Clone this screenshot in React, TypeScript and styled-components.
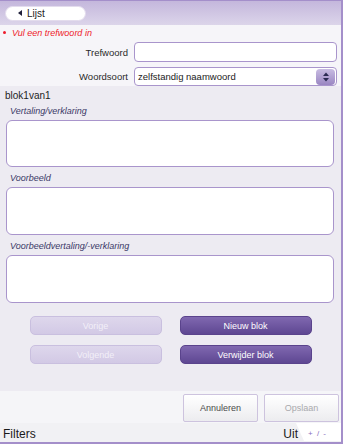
import styled, { createGlobalStyle } from "styled-components";

const GlobalStyle = createGlobalStyle`
  html, body {
    margin: 0;
    padding: 0;
    background: #ffffff;
  }
  * {
    box-sizing: border-box;
  }
`;

function App() {
  return (
    <>
      <GlobalStyle />
      <Page>
        <Header>
          <BackButton>
            <BackArrow />
            Lijst
          </BackButton>
        </Header>

        <TopForm>
          <ErrorLine>
            <ErrorDot />
            Vul een trefwoord in
          </ErrorLine>
          <FieldRow>
            <FieldName>Trefwoord</FieldName>
            <TextInput $height={20} />
          </FieldRow>
          <FieldRow>
            <FieldName>Woordsoort</FieldName>
            <SelectBox>
              <span>zelfstandig naamwoord</span>
              <Spinner>
                <svg width="8" height="12" viewBox="0 0 8 12">
                  <path d="M4 1.5 L7 5 L1 5 Z" fill="#2b2a52" />
                  <path d="M4 10.5 L7 7 L1 7 Z" fill="#2b2a52" />
                </svg>
              </Spinner>
            </SelectBox>
          </FieldRow>
        </TopForm>

        <Main>
          <BlockTitle>blok1van1</BlockTitle>
          <AreaLabel>Vertaling/verklaring</AreaLabel>
          <TextArea $height={47} />
          <AreaLabel>Voorbeeld</AreaLabel>
          <TextArea $height={48} />
          <AreaLabel>Voorbeeldvertaling/-verklaring</AreaLabel>
          <TextArea $height={48} />

          <ButtonGrid>
            <BlockButton $active={false}>Vorige</BlockButton>
            <BlockButton $active>Nieuw blok</BlockButton>
            <BlockButton $active={false}>Volgende</BlockButton>
            <BlockButton $active>Verwijder blok</BlockButton>
          </ButtonGrid>
        </Main>

        <Actions>
          <ActionButton $disabled={false}>Annuleren</ActionButton>
          <ActionButton $disabled>Opslaan</ActionButton>
        </Actions>

        <FilterBar>
          <FilterTitle>Filters</FilterTitle>
          <FilterState>Uit</FilterState>
          <ToggleTab>+ / -</ToggleTab>
        </FilterBar>
      </Page>
    </>
  );
}

const Page = styled.div`
  width: 343px;
  height: 444px;
  display: flex;
  flex-direction: column;
  border-right: 2px solid #a48fca;
  border-bottom: 2px solid #a48fca;
  font-family: "Liberation Sans", Arial, sans-serif;
  overflow: hidden;
`;

const Header = styled.div`
  height: 25px;
  flex: none;
  display: flex;
  align-items: center;
  padding-left: 5px;
  border-top: 1px solid #a48fca;
  background: linear-gradient(#c4b7dc, #dcd5ea);
`;

const BackButton = styled.div`
  width: 81px;
  height: 15px;
  display: flex;
  align-items: center;
  gap: 5px;
  padding-left: 12px;
  background: #ffffff;
  border: 1px solid #e3dced;
  border-radius: 8px;
  font-size: 10px;
  color: #222222;
`;

const BackArrow = styled.span`
  width: 0;
  height: 0;
  border-top: 3px solid transparent;
  border-bottom: 3px solid transparent;
  border-right: 4px solid #1f1f3a;
`;

const TopForm = styled.div`
  height: 61px;
  flex: none;
  display: flex;
  flex-direction: column;
  gap: 5px;
  padding: 3px 4px 0 0;
  background: #f6f5f9;
`;

const ErrorLine = styled.div`
  display: flex;
  align-items: center;
  gap: 6px;
  padding-left: 3px;
  height: 9px;
  font-size: 9px;
  font-style: italic;
  color: #ee1c2c;
`;

const ErrorDot = styled.span`
  width: 3px;
  height: 3px;
  border-radius: 50%;
  background: #ee1c2c;
`;

const FieldRow = styled.div`
  display: grid;
  grid-template-columns: 128px 1fr;
  column-gap: 6px;
  align-items: center;
`;

const FieldName = styled.div`
  text-align: right;
  font-size: 9.5px;
  color: #2a2a2a;
`;

const TextInput = styled.div<{ $height: number }>`
  height: ${(p) => p.$height}px;
  background: #ffffff;
  border: 1px solid #a995cc;
  border-radius: 4px;
`;

const SelectBox = styled.div`
  height: 19px;
  display: flex;
  align-items: center;
  justify-content: space-between;
  padding: 0 1px 0 3px;
  background: #ffffff;
  border: 1px solid #a995cc;
  border-radius: 4px;
  font-size: 9.5px;
  color: #222222;
`;

const Spinner = styled.div`
  width: 19px;
  height: 16px;
  display: flex;
  align-items: center;
  justify-content: center;
  border-radius: 4px;
  background: linear-gradient(#c8bce2, #9a86c2);
`;

const Main = styled.div`
  flex: 1;
  display: flex;
  flex-direction: column;
  padding: 4px 7px 0 6px;
  background: #edebf2;
`;

const BlockTitle = styled.div`
  height: 12px;
  margin-left: -1px;
  font-size: 10px;
  line-height: 12px;
  color: #1e1e1e;
`;

const AreaLabel = styled.div`
  height: 12px;
  margin: 3px 0 3px 4px;
  font-size: 9px;
  line-height: 12px;
  font-style: italic;
  color: #3a3866;

  &:not(:nth-child(2)) {
    margin-top: 5px;
  }
`;

const TextArea = styled.div<{ $height: number }>`
  height: ${(p) => p.$height}px;
  background: #ffffff;
  border: 1px solid #a995cc;
  border-radius: 6px;
`;

const ButtonGrid = styled.div`
  display: grid;
  grid-template-columns: 132px 132px;
  justify-content: center;
  column-gap: 18px;
  row-gap: 10px;
  margin-top: 13px;
  margin-left: 1px;
`;

const BlockButton = styled.div<{ $active: boolean }>`
  height: 19px;
  display: flex;
  align-items: center;
  justify-content: center;
  border-radius: 5px;
  font-size: 9px;
  color: ${(p) => (p.$active ? "#ffffff" : "#f2eff8")};
  background: ${(p) =>
    p.$active
      ? "linear-gradient(#8068b0, #5e4792)"
      : "linear-gradient(#ded7ec, #d2c9e5)"};
  border: 1px solid ${(p) => (p.$active ? "#5a438c" : "#c9bfdf")};
`;

const Actions = styled.div`
  height: 32px;
  flex: none;
  display: flex;
  justify-content: flex-end;
  align-items: flex-start;
  gap: 6px;
  padding: 3px 2px 0 0;
  background: #f5f5f8;
`;

const ActionButton = styled.div<{ $disabled: boolean }>`
  width: 75px;
  height: 28px;
  display: flex;
  align-items: center;
  justify-content: center;
  border: 1px solid #cdc3de;
  border-radius: 2px;
  background: linear-gradient(#ffffff, #ececef);
  font-size: 9px;
  color: ${(p) => (p.$disabled ? "#a9a9ad" : "#4a4a4a")};
`;

const FilterBar = styled.div`
  height: 19px;
  flex: none;
  display: flex;
  align-items: flex-end;
  padding: 0 0 1px 3px;
  background: #f1f1f4;
`;

const FilterTitle = styled.div`
  flex: 1;
  font-size: 12px;
  line-height: 14px;
  color: #1a1a1a;
`;

const FilterState = styled.div`
  font-size: 12px;
  line-height: 14px;
  color: #1a1a1a;
  margin-right: -2px;
`;

const ToggleTab = styled.div`
  width: 45px;
  height: 18px;
  display: flex;
  align-items: center;
  padding: 3px 0 0 12px;
  background: #ffffff;
  clip-path: polygon(0 0, 100% 0, 100% 100%, 8px 100%);
  font-size: 8px;
  color: #8a70c0;
  letter-spacing: 1px;
`;

export default App;
